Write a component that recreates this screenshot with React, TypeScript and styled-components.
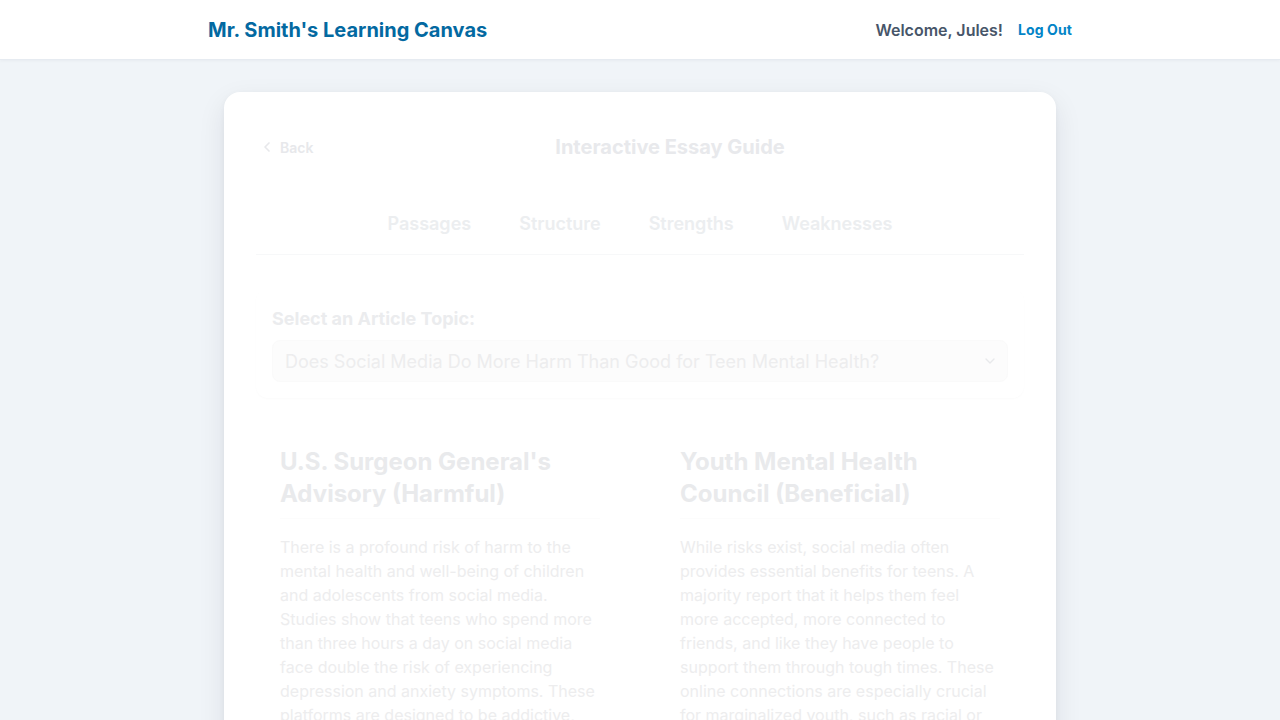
import React from "react";
import styled, { createGlobalStyle } from "styled-components";
import { ChevronLeft, ChevronDown } from "lucide-react";

const Global = createGlobalStyle`
  html, body { margin: 0; padding: 0; }
  body {
    background: #f0f4f8;
    font-family: Inter, "Noto Sans", "Liberation Sans", sans-serif;
    overflow: hidden;
  }
  * { box-sizing: border-box; }
`;

const Page = styled.div`
  min-height: 100vh;
  background: #f0f4f8;
`;

const Header = styled.header`
  height: 60px;
  background: #ffffff;
  border-bottom: 1px solid #e6ebf1;
  box-shadow: 0 1px 3px rgba(15, 23, 42, 0.04);
`;

const HeaderInner = styled.div`
  max-width: 864px;
  height: 100%;
  margin: 0 auto;
  display: flex;
  align-items: center;
  justify-content: space-between;
`;

const Brand = styled.h1`
  margin: 0;
  font-size: 20px;
  font-weight: 700;
  color: #0369a1;
`;

const UserBox = styled.div`
  display: flex;
  align-items: center;
  gap: 15px;
`;

const Welcome = styled.span`
  font-size: 16px;
  font-weight: 600;
  color: #475569;
`;

const LogOut = styled.button`
  border: none;
  background: none;
  padding: 0;
  font-family: inherit;
  font-size: 14px;
  font-weight: 700;
  letter-spacing: 0.1px;
  color: #0284c7;
  cursor: pointer;
`;

const Main = styled.main`
  padding-top: 32px;
  display: flex;
  justify-content: center;
`;

const Card = styled.section`
  width: 832px;
  background: #ffffff;
  border-radius: 16px;
  padding: 32px;
  box-shadow: 0 10px 28px rgba(15, 23, 42, 0.09), 0 2px 6px rgba(15, 23, 42, 0.04);
`;

const TopBar = styled.div`
  height: 46px;
  display: flex;
  align-items: center;
`;

const BackButton = styled.button`
  display: flex;
  align-items: center;
  gap: 5px;
  width: 60px;
  padding: 0 0 0 3px;
  border: none;
  background: none;
  font-family: inherit;
  font-size: 14px;
  font-weight: 600;
  color: #e7e8eb;
  cursor: pointer;
`;

const Title = styled.h2`
  flex: 1;
  margin: 0;
  text-align: center;
  font-size: 20px;
  line-height: 28px;
  font-weight: 700;
  color: #e8e9ec;
`;

const Tabs = styled.nav`
  margin-top: 24px;
  display: flex;
  justify-content: center;
  gap: 48px;
  border-bottom: 1px solid #f7f8f9;
`;

const Tab = styled.button`
  border: none;
  background: none;
  padding: 16px 0;
  font-family: inherit;
  font-size: 18px;
  line-height: 28px;
  font-weight: 600;
  color: #eceef0;
  cursor: pointer;
`;

const SelectSection = styled.div`
  margin-top: 34px;
  padding: 16px;
  border-radius: 12px;
  background: #ffffff;
  box-shadow: 0 1px 2px rgba(15, 23, 42, 0.02);
`;

const Label = styled.label`
  display: block;
  margin-bottom: 8px;
  font-size: 18px;
  line-height: 27px;
  font-weight: 700;
  color: #ebecee;
`;

const SelectWrap = styled.div`
  position: relative;
  height: 42px;
`;

const Select = styled.select`
  appearance: none;
  width: 100%;
  height: 100%;
  padding: 0 36px 0 12px;
  border: 1px solid #fafafa;
  border-radius: 8px;
  background: #fcfcfc;
  font-family: inherit;
  font-size: 18px;
  color: #ededee;
  outline: none;
`;

const SelectIcon = styled.span`
  position: absolute;
  right: 10px;
  top: 50%;
  transform: translateY(-50%);
  display: flex;
  color: #e8e9eb;
  pointer-events: none;
`;

const Columns = styled.div`
  margin-top: 24px;
  display: grid;
  grid-template-columns: 1fr 1fr;
  gap: 32px;
`;

const Column = styled.article`
  padding: 24px;
`;

const ColumnTitle = styled.h3`
  margin: 0 0 16px;
  padding-bottom: 8px;
  font-size: 24px;
  line-height: 32px;
  font-weight: 700;
  color: #e9eaec;
  border-bottom: 1px solid #fcfcfc;
`;

const Paragraph = styled.p`
  margin: 0;
  font-size: 16px;
  line-height: 24px;
  color: #ededee;
`;

const tabs = ["Passages", "Structure", "Strengths", "Weaknesses"];

const columns = [
  {
    title: "U.S. Surgeon General's Advisory (Harmful)",
    text: "There is a profound risk of harm to the mental health and well-being of children and adolescents from social media. Studies show that teens who spend more than three hours a day on social media face double the risk of experiencing depression and anxiety symptoms. These platforms are designed to be addictive, keeping young users scrolling long after they intended to stop and cutting into time for sleep and exercise.",
  },
  {
    title: "Youth Mental Health Council (Beneficial)",
    text: "While risks exist, social media often provides essential benefits for teens. A majority report that it helps them feel more accepted, more connected to friends, and like they have people to support them through tough times. These online connections are especially crucial for marginalized youth, such as racial or sexual minorities, who may find community and support that is missing offline.",
  },
];

export default function App() {
  return (
    <Page>
      <Global />
      <Header>
        <HeaderInner>
          <Brand>Mr. Smith's Learning Canvas</Brand>
          <UserBox>
            <Welcome>Welcome, Jules!</Welcome>
            <LogOut>Log Out</LogOut>
          </UserBox>
        </HeaderInner>
      </Header>
      <Main>
        <Card>
          <TopBar>
            <BackButton>
              <ChevronLeft size={16} strokeWidth={2.5} />
              Back
            </BackButton>
            <Title>Interactive Essay Guide</Title>
          </TopBar>
          <Tabs>
            {tabs.map((t) => (
              <Tab key={t}>{t}</Tab>
            ))}
          </Tabs>
          <SelectSection>
            <Label htmlFor="topic">Select an Article Topic:</Label>
            <SelectWrap>
              <Select id="topic" defaultValue="social">
                <option value="social">
                  Does Social Media Do More Harm Than Good for Teen Mental Health?
                </option>
              </Select>
              <SelectIcon>
                <ChevronDown size={16} strokeWidth={2} />
              </SelectIcon>
            </SelectWrap>
          </SelectSection>
          <Columns>
            {columns.map((c) => (
              <Column key={c.title}>
                <ColumnTitle>{c.title}</ColumnTitle>
                <Paragraph>{c.text}</Paragraph>
              </Column>
            ))}
          </Columns>
        </Card>
      </Main>
    </Page>
  );
}
